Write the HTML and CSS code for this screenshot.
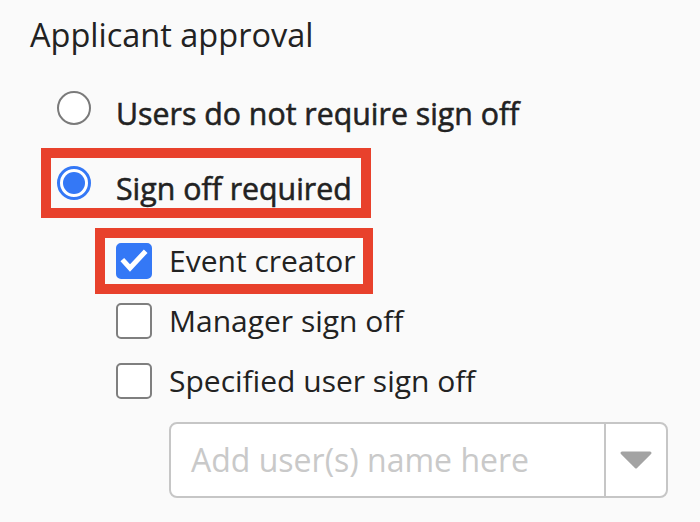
FILE: index.html
```html
<!DOCTYPE html>
<html>
<head>
    <link rel="stylesheet" href="styles.css">
</head>
<body>
    <div class="panel">
        <h2 class="title">Applicant approval</h2>

        <div class="options">
            <label class="option radio-option">
                <span class="radio"></span>
                <span class="option-label strong">Users do not require sign off</span>
            </label>
            <label class="option radio-option is-marked">
                <span class="radio checked"></span>
                <span class="option-label strong">Sign off required</span>
            </label>

            <label class="option check-option is-marked">
                <span class="checkbox checked">
                    <svg width="36" height="36" viewBox="0 0 36 36">
                        <path d="M8 18.5 L14 25 L28 10" fill="none" stroke="#fff" stroke-width="5" stroke-linecap="square"/>
                    </svg>
                </span>
                <span class="option-label">Event creator</span>
            </label>
            <label class="option check-option">
                <span class="checkbox"></span>
                <span class="option-label">Manager sign off</span>
            </label>
            <label class="option check-option">
                <span class="checkbox"></span>
                <span class="option-label">Specified user sign off</span>
            </label>

            <div class="user-select">
                <span class="user-input">Add user(s) name here</span>
                <span class="user-toggle">
                    <svg width="34" height="20" viewBox="0 0 34 20">
                        <polygon points="3,3 31,3 17,17" fill="#a3a3a3" stroke="#a3a3a3" stroke-width="3" stroke-linejoin="round"/>
                    </svg>
                </span>
            </div>
        </div>
    </div>
</body>
</html>
```

FILE: styles.css
```css
:root {
    --text: #222222;
    --blue: #3478f6;
    --mark: #e8412c;
    --line: #c6c6c6;
    --bg: #fafafa;
}

* {
    box-sizing: border-box;
}

body {
    margin: 0;
    background: var(--bg);
    font-family: 'Open Sans', 'Noto Sans', sans-serif;
    color: var(--text);
}

.panel {
    padding: 13px 0 0 30px;
}

.title {
    margin: 0 0 26px;
    font-size: 32.5px;
    font-weight: 400;
    line-height: 44px;
}

.options {
    display: flex;
    flex-direction: column;
    align-items: flex-start;
}

.option {
    display: inline-flex;
    align-items: center;
    font-size: 30px;
    line-height: 40px;
}

/* no medium weight installed, so thicken the regular face a little */
.option-label.strong {
    padding-top: 12px;
    font-size: 30.3px;
    -webkit-text-stroke: 0.55px var(--text);
}

.radio-option {
    height: 50px;
    margin-left: 21px;
    padding: 0 9px 0 6px;
    gap: 25px;
}

.radio-option:first-child {
    margin-bottom: 25px;
}

.radio-option + .check-option {
    margin-top: 30px;
}

.check-option {
    height: 46px;
    margin-left: 75px;
    margin-bottom: 14px;
    padding: 0 7px 0 11px;
    gap: 17px;
}

.is-marked {
    outline: 10px solid var(--mark);
}

.radio {
    width: 34px;
    height: 34px;
    flex-shrink: 0;
    border: 2px solid #7a7a7a;
    border-radius: 50%;
    background: #fff;
    display: flex;
    align-items: center;
    justify-content: center;
}

.radio.checked {
    border: 3px solid var(--blue);
}

.radio.checked::after {
    content: '';
    width: 22px;
    height: 22px;
    border-radius: 50%;
    background: var(--blue);
}

.checkbox {
    width: 36px;
    height: 36px;
    flex-shrink: 0;
    border: 2px solid #7f7f7f;
    border-radius: 5px;
    background: #fff;
    position: relative;
}

.checkbox.checked {
    border-color: var(--blue);
    background: var(--blue);
}

.checkbox svg {
    position: absolute;
    top: -2px;
    left: -2px;
}

.user-select {
    display: flex;
    width: 499px;
    height: 76px;
    margin: 4px 0 0 139px;
    border: 2px solid var(--line);
    border-radius: 8px;
    background: #fff;
}

.user-input {
    flex: 1;
    padding-left: 20px;
    font-size: 32px;
    line-height: 72px;
    color: #c9c9c9;
}

.user-toggle {
    width: 62px;
    border-left: 2px solid var(--line);
    display: flex;
    align-items: center;
    justify-content: center;
}
```
